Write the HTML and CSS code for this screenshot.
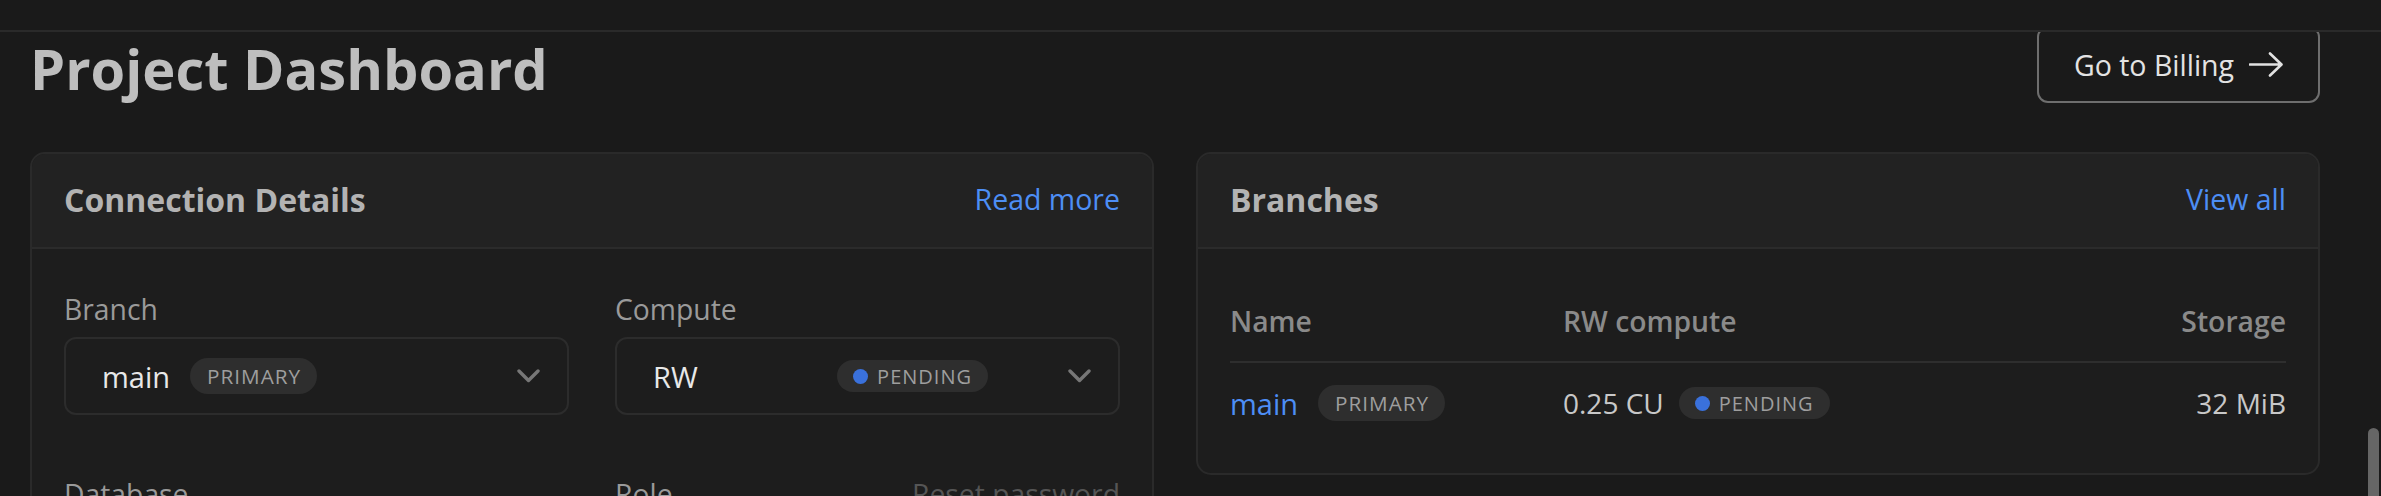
FILE: index.html
```html
<!DOCTYPE html>
<html lang="en">
<head>
<meta charset="utf-8">
<title>Project Dashboard</title>
<link rel="stylesheet" href="styles.css">
</head>
<body>
<div class="topbar"></div>
<main class="page">
  <div class="page-head">
    <h1 class="page-title">Project Dashboard</h1>
    <a class="btn-outline" href="#"><span class="btn-text">Go to Billing</span>
      <svg class="btn-arrow" width="34" height="25" viewBox="0 0 34 25"><path d="M1 12.5H32M21 1.5L32.5 12.5L21 23.5" fill="none" stroke="#e2e2e2" stroke-width="2.6" stroke-linecap="round" stroke-linejoin="round"/></svg>
    </a>
  </div>
  <div class="cards">
    <section class="card">
      <header class="card-head">
        <h2 class="card-title">Connection Details</h2>
        <a class="link" href="#">Read more</a>
      </header>
      <div class="card-body conn-grid">
        <div class="field">
          <div class="field-label"><span>Branch</span></div>
          <div class="select">
            <div class="select-value">
              <span class="value-text">main</span>
              <span class="badge badge-lg">PRIMARY</span>
            </div>
            <svg class="chev" width="23" height="14" viewBox="0 0 23 14"><path d="M2 2L11.5 11.5L21 2" fill="none" stroke="#777" stroke-width="3.4" stroke-linecap="round" stroke-linejoin="round"/></svg>
          </div>
        </div>
        <div class="field">
          <div class="field-label"><span>Compute</span></div>
          <div class="select">
            <div class="select-value spread">
              <span class="value-text">RW</span>
              <span class="badge badge-sm"><i class="dot"></i>PENDING</span>
            </div>
            <svg class="chev" width="23" height="14" viewBox="0 0 23 14"><path d="M2 2L11.5 11.5L21 2" fill="none" stroke="#777" stroke-width="3.4" stroke-linecap="round" stroke-linejoin="round"/></svg>
          </div>
        </div>
        <div class="field">
          <div class="field-label"><span>Database</span></div>
          <div class="select">
            <div class="select-value"><span class="value-text">neondb</span></div>
          </div>
        </div>
        <div class="field">
          <div class="field-label"><span>Role</span><a class="dim-link" href="#">Reset password</a></div>
          <div class="select">
            <div class="select-value"><span class="value-text">neondb_owner</span></div>
          </div>
        </div>
      </div>
    </section>
    <section class="card card-short">
      <header class="card-head">
        <h2 class="card-title">Branches</h2>
        <a class="link" href="#">View all</a>
      </header>
      <div class="card-body table-body">
        <div class="tbl">
          <div class="th">Name</div>
          <div class="th">RW compute</div>
          <div class="th th-right">Storage</div>
          <div class="td"><a class="link row-link" href="#">main</a><span class="badge badge-lg">PRIMARY</span></div>
          <div class="td"><span class="num">0.25 CU</span><span class="badge badge-sm"><i class="dot"></i>PENDING</span></div>
          <div class="td td-right"><span class="num">32 MiB</span></div>
        </div>
      </div>
    </section>
  </div>
</main>
<div class="scroll-thumb"></div>
</body>
</html>
```
FILE: styles.css
```css
* { box-sizing: border-box; }
html, body { margin: 0; padding: 0; }
body {
  background: #1a1a1a;
  font-family: "Open Sans", "Noto Sans", sans-serif;
  color: #e6e6e6;
  height: 496px;
  overflow: hidden;
}
.topbar {
  position: fixed;
  top: 0; left: 0; right: 0;
  height: 32px;
  background: #1a1a1a;
  border-bottom: 2px solid #2a2a2a;
  z-index: 5;
}
.page {
  padding: 26px 61px 0 30px;
}
.page-head {
  display: flex;
  justify-content: space-between;
  align-items: flex-start;
  margin-bottom: 49px;
}
.page-title {
  margin: 8px 0 0 0;
  font-size: 56px;
  line-height: 68px;
  font-weight: 700;
  color: #bebebe;
}
.btn-outline {
  display: flex;
  align-items: center;
  justify-content: center;
  gap: 15px;
  height: 77px;
  width: 283px;
  padding: 0 20px;
  border: 2px solid #6e6e6e;
  border-radius: 11px;
  color: #e3e3e3;
  text-decoration: none;
  font-size: 28.5px;
  font-weight: 500;
  white-space: nowrap;
}
.btn-arrow { flex: none; }
.cards {
  display: grid;
  grid-template-columns: 1fr 1fr;
  gap: 42px;
  align-items: start;
}
.card {
  border: 2px solid #2a2a2a;
  border-radius: 15px;
  background: #1d1d1d;
  overflow: hidden;
}
.card-head {
  height: 95px;
  display: flex;
  align-items: center;
  justify-content: space-between;
  padding: 0 32px 3px;
  background: #222222;
  border-bottom: 2px solid #2b2b2b;
}
.card-title {
  margin: 0;
  font-size: 32px;
  font-weight: 700;
  color: #b3b3b3;
}
.link {
  color: #4d8ef5;
  text-decoration: none;
  font-size: 28.5px;
  font-weight: 400;
}
.card-body { padding: 40px 32px 30px; }
.conn-grid {
  display: grid;
  grid-template-columns: 1fr 1fr;
  column-gap: 46px;
  row-gap: 59px;
}
.field-label {
  display: flex;
  justify-content: space-between;
  font-size: 28.3px;
  line-height: 40px;
  color: #9a9a9a;
  margin-bottom: 8px;
}
.dim-link { color: #555555; text-decoration: none; }
.select {
  height: 78px;
  border: 2px solid #2c2c2c;
  border-radius: 12px;
  display: flex;
  align-items: center;
  padding: 0 27px 0 36px;
}
.select-value {
  flex: 1;
  display: flex;
  align-items: center;
  gap: 20px;
}
.select-value.spread {
  justify-content: space-between;
  margin-right: 80px;
}
.value-text {
  font-size: 29px;
  color: #e8e8e8;
}
.chev { flex: none; }
.badge {
  display: inline-flex;
  align-items: center;
  border-radius: 999px;
  background: #2e2e2e;
  color: #9e9e9e;
  letter-spacing: 1px;
  white-space: nowrap;
}
.badge-lg {
  height: 36px;
  padding: 0 16px 0 17px;
  font-size: 20.7px;
}
.badge-sm {
  height: 32px;
  padding: 0 16px;
  font-size: 20px;
  gap: 9px;
}
.dot {
  width: 15px;
  height: 15px;
  border-radius: 50%;
  background: #3a71dc;
}
.table-body { padding: 52px 32px 30px; }
.tbl {
  display: grid;
  grid-template-columns: 333px 1fr auto;
}
.th {
  font-size: 28.3px;
  line-height: 40px;
  font-weight: 600;
  color: #8a8a8a;
  padding-bottom: 20px;
  border-bottom: 2px solid #2e2e2e;
}
.th-right, .td-right { text-align: right; justify-content: flex-end; }
.td {
  height: 80px;
  display: flex;
  align-items: center;
  gap: 20px;
}
.row-link { font-size: 29px; }
.num { font-size: 28px; color: #c8c8c8; }
.td .badge-sm { margin-left: -5px; }
.scroll-thumb {
  position: fixed;
  right: 2px;
  top: 428px;
  width: 11px;
  height: 90px;
  border-radius: 6px;
  background: #666666;
}
```
